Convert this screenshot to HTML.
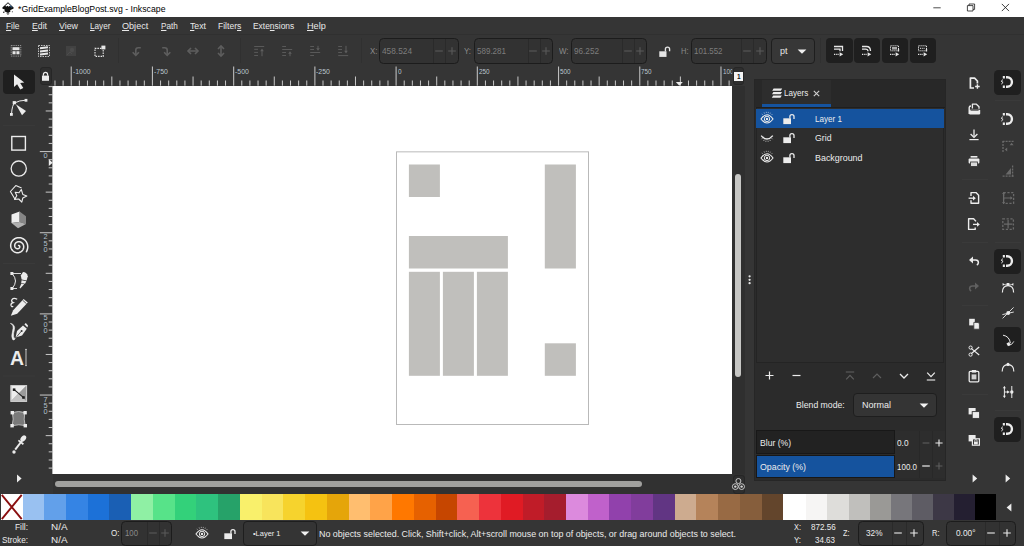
<!DOCTYPE html>
<html><head><meta charset="utf-8"><title>Inkscape</title>
<style>
html,body{margin:0;padding:0;}
body{width:1024px;height:546px;overflow:hidden;background:#353535;position:relative;font-family:"Liberation Sans",sans-serif;}
#app{position:absolute;left:0;top:0;width:1024px;height:546px;overflow:hidden;}
#app div,#app span,#app svg{position:absolute;}
#app div{box-sizing:border-box;}
.t{white-space:nowrap;transform-origin:0 50%;}
svg{overflow:visible;}
</style></head><body><div id="app">
<div style="left:0px;top:0px;width:1024px;height:17px;background:#ffffff;"></div>
<svg style="left:2px;top:2px;" width="12" height="13" viewBox="0 0 12 13"><path d="M6 0.3 L0.4 5.6 Q0 6.3 0.8 6.7 L2.6 7.6 Q3.2 8 2.6 8.5 Q2 9 2.8 9.4 L5 10.6 Q6 11.2 7 10.6 L8.2 9.8 Q8.8 9.3 8.2 8.8 Q7.8 8.3 8.6 7.9 L11.2 6.7 Q12 6.3 11.6 5.6 Z" fill="#111"/>
<path d="M6 1.2 L3.2 3.9 L4.6 4.6 L5.6 3.8 L6.6 4.7 L7.6 4.0 L8.9 4.1 Z" fill="#fff"/>
<path d="M7.2 2.3 L10.6 5.6 L8.8 5.2 Z" fill="#3a6ea5"/>
<circle cx="1.8" cy="10.3" r="0.7" fill="#111"/><circle cx="10.3" cy="9.8" r="0.5" fill="#111"/><path d="M4.2 11.6 L7.6 11.6 L6 12.8Z" fill="#111"/></svg>
<span id="t1" class="t" style="left:17.5px;top:3.72px;font-size:9.3px;line-height:11.16px;color:#000;font-weight:normal;transform:scaleX(0.9389);">*GridExampleBlogPost.svg - Inkscape</span>
<svg style="left:930px;top:0px;" width="94" height="17" viewBox="0 0 94 17"><path d="M3.3 7.8h7.4" stroke="#222" stroke-width="0.8" fill="none"/>
<path d="M37.4 5.6h5.6v5.4h-5.6z M39 5.6v-1.6h5.6v5.4h-1.6" stroke="#1a1a1a" stroke-width="0.8" fill="none" stroke-linejoin="round"/>
<path d="M71.8 3.9l7.2 7.2M79 3.9l-7.2 7.2" stroke="#1a1a1a" stroke-width="0.85" fill="none"/></svg>
<div style="left:0px;top:17px;width:1024px;height:18px;background:#353535;"></div>
<div style="left:0px;top:33.6px;width:1024px;height:1px;background:#303030;"></div>
<span id="t2" class="t" style="left:6px;top:20.24px;font-size:9.6px;line-height:11.52px;color:#e8e8e8;font-weight:normal;transform:scaleX(0.8718);text-underline-offset:1px;"><u>F</u>ile</span>
<span id="t3" class="t" style="left:31.5px;top:20.24px;font-size:9.6px;line-height:11.52px;color:#e8e8e8;font-weight:normal;transform:scaleX(0.9065);text-underline-offset:1px;"><u>E</u>dit</span>
<span id="t4" class="t" style="left:58.5px;top:20.24px;font-size:9.6px;line-height:11.52px;color:#e8e8e8;font-weight:normal;transform:scaleX(0.9205);text-underline-offset:1px;"><u>V</u>iew</span>
<span id="t5" class="t" style="left:89.5px;top:20.24px;font-size:9.6px;line-height:11.52px;color:#e8e8e8;font-weight:normal;transform:scaleX(0.8536);text-underline-offset:1px;"><u>L</u>ayer</span>
<span id="t6" class="t" style="left:122.25px;top:20.24px;font-size:9.6px;line-height:11.52px;color:#e8e8e8;font-weight:normal;transform:scaleX(0.9465);text-underline-offset:1px;"><u>O</u>bject</span>
<span id="t7" class="t" style="left:160.75px;top:20.24px;font-size:9.6px;line-height:11.52px;color:#e8e8e8;font-weight:normal;transform:scaleX(0.8481);text-underline-offset:1px;"><u>P</u>ath</span>
<span id="t8" class="t" style="left:189.5px;top:20.24px;font-size:9.6px;line-height:11.52px;color:#e8e8e8;font-weight:normal;transform:scaleX(0.9086);text-underline-offset:1px;"><u>T</u>ext</span>
<span id="t9" class="t" style="left:217.5px;top:20.24px;font-size:9.6px;line-height:11.52px;color:#e8e8e8;font-weight:normal;transform:scaleX(0.8900);text-underline-offset:1px;">Filter<u>s</u></span>
<span id="t10" class="t" style="left:253px;top:20.24px;font-size:9.6px;line-height:11.52px;color:#e8e8e8;font-weight:normal;transform:scaleX(0.8785);text-underline-offset:1px;">Exte<u>n</u>sions</span>
<span id="t11" class="t" style="left:306.75px;top:20.24px;font-size:9.6px;line-height:11.52px;color:#e8e8e8;font-weight:normal;transform:scaleX(0.9494);text-underline-offset:1px;"><u>H</u>elp</span>
<div style="left:0px;top:35px;width:1024px;height:31px;background:#353535;"></div>
<svg style="left:8.0px;top:42.8px;" width="16" height="16" viewBox="0 0 16 16"><rect x="3.2" y="2.5" width="9.6" height="10.6" fill="none" stroke="#bdbdbd" stroke-width="0.7" stroke-dasharray="1.3 0.9"/><rect x="4.5" y="4.2" width="7" height="3" fill="#e6e6e6"/><rect x="4.5" y="8.2" width="3.1" height="3.1" fill="#e6e6e6"/><rect x="8.4" y="8.2" width="3.1" height="3.1" fill="#e6e6e6"/></svg>
<svg style="left:35.75px;top:42.8px;" width="16" height="16" viewBox="0 0 16 16"><rect x="2.5" y="2.5" width="11" height="11" fill="none" stroke="#e6e6e6" stroke-width="0.8" stroke-dasharray="1.5 1"/><path d="M4 5.2l8-1M4 8.4l8-1M4 11.6l8-1" stroke="#e6e6e6" stroke-width="2"/></svg>
<svg style="left:63.0px;top:42.8px;" width="16" height="16" viewBox="0 0 16 16"><rect x="3" y="3" width="10" height="10" fill="#424242"/><circle cx="9" cy="7" r="2.2" fill="#4c4c4c"/><path d="M4 12l3-3 2 2" stroke="#4c4c4c" fill="none"/></svg>
<svg style="left:91.5px;top:42.8px;" width="16" height="16" viewBox="0 0 16 16"><path d="M9.4 5.4H3v8h8.2V6.6" fill="none" stroke="#e6e6e6" stroke-width="1.1" stroke-dasharray="1.5 1"/><rect x="9.4" y="2.6" width="4" height="3.8" fill="#e6e6e6"/></svg>
<div style="left:118.4px;top:38px;width:1px;height:25px;background:#303030;"></div>
<svg style="left:129.4px;top:42.8px;" width="16" height="16" viewBox="0 0 16 16"><path d="M11.8 4.7h-2.6q-2.4 0-2.4 2.4v4.8" stroke="#5e5e5e" stroke-width="1.6" fill="none"/><path d="M3.7 9.2l3.1 3.2 3.1-3.2" stroke="#5e5e5e" stroke-width="1.6" fill="none"/></svg>
<svg style="left:157.75px;top:42.8px;" width="16" height="16" viewBox="0 0 16 16"><path d="M4.2 4.7h2.6q2.4 0 2.4 2.4v4.8" stroke="#5e5e5e" stroke-width="1.6" fill="none"/><path d="M6.1 9.2l3.1 3.2 3.1-3.2" stroke="#5e5e5e" stroke-width="1.6" fill="none"/></svg>
<svg style="left:185.4px;top:42.8px;" width="16" height="16" viewBox="0 0 16 16"><path d="M3.6 8h8.8" stroke="#5e5e5e" stroke-width="1.6"/><path d="M6 5l-3 3 3 3M10 5l3 3-3 3" stroke="#5e5e5e" stroke-width="1.6" fill="none"/></svg>
<svg style="left:213.0px;top:43.099999999999994px;" width="16" height="16" viewBox="0 0 16 16"><path d="M8 3.6v8.8" stroke="#5e5e5e" stroke-width="1.6"/><path d="M5 6l3-3 3 3M5 10l3 3 3-3" stroke="#5e5e5e" stroke-width="1.6" fill="none"/></svg>
<div style="left:240.2px;top:38px;width:1px;height:25px;background:#303030;"></div>
<svg style="left:250.75px;top:42.8px;" width="16" height="16" viewBox="0 0 16 16"><path d="M3.2 3.5h10" stroke="#5e5e5e" stroke-width="0.9"/><path d="M3.2 6.3h3.8M3.2 9.4h3.8M3.2 12.5h3.8" stroke="#5e5e5e" stroke-width="0.9"/><path d="M11 13.2v-6" stroke="#5e5e5e" stroke-width="1"/><path d="M9.2 8.2l1.8-2.6 1.8 2.6z" fill="#5e5e5e"/></svg>
<svg style="left:278.75px;top:42.8px;" width="16" height="16" viewBox="0 0 16 16"><path d="M3.2 3.5h3.8" stroke="#5e5e5e" stroke-width="0.9"/><path d="M3.2 6.5h10" stroke="#5e5e5e" stroke-width="0.9"/><path d="M3.2 9.5h3.8M3.2 12.5h3.8" stroke="#5e5e5e" stroke-width="0.9"/><path d="M11 13.2v-3.4" stroke="#5e5e5e" stroke-width="1"/><path d="M9.2 10.8l1.8-2.6 1.8 2.6z" fill="#5e5e5e"/></svg>
<svg style="left:306.5px;top:42.8px;" width="16" height="16" viewBox="0 0 16 16"><path d="M3.2 3.5h3.8M3.2 6.5h3.8" stroke="#5e5e5e" stroke-width="0.9"/><path d="M3.2 9.5h10" stroke="#5e5e5e" stroke-width="0.9"/><path d="M3.2 12.5h3.8" stroke="#5e5e5e" stroke-width="0.9"/><path d="M11 2.8v3.4" stroke="#5e5e5e" stroke-width="1"/><path d="M9.2 5.2l1.8 2.6 1.8-2.6z" fill="#5e5e5e"/></svg>
<svg style="left:334.5px;top:42.8px;" width="16" height="16" viewBox="0 0 16 16"><path d="M3.2 3.5h3.8M3.2 6.5h3.8M3.2 9.5h3.8" stroke="#5e5e5e" stroke-width="0.9"/><path d="M3.2 12.6h10" stroke="#5e5e5e" stroke-width="0.9"/><path d="M11 2.8v6" stroke="#5e5e5e" stroke-width="1"/><path d="M9.2 7.8l1.8 2.6 1.8-2.6z" fill="#5e5e5e"/></svg>
<div style="left:361.3px;top:38px;width:1px;height:25px;background:#303030;"></div>
<span id="t12" class="t" style="left:370px;top:45.10px;font-size:9.5px;line-height:11.40px;color:#8a8a8a;font-weight:normal;transform:scaleX(0.8348);">X:</span>
<div style="left:378.85px;top:38.3px;width:80.3px;height:25.4px;background:#323232;border:1px solid #1c1c1c;border-radius:4.5px;"></div>
<div style="left:433.15px;top:39.3px;width:1px;height:23.4px;background:#2a2a2a;"></div>
<div style="left:445.25px;top:39.3px;width:1px;height:23.4px;background:#2a2a2a;"></div>
<span id="t13" class="t" style="left:381.75px;top:45.10px;font-size:9.5px;line-height:11.40px;color:#7d7d7d;font-weight:normal;transform:scaleX(0.8735);">458.524</span>
<svg style="left:434.75px;top:46.8px;" width="8" height="8" viewBox="0 0 8 8"><path d="M0.2 4h7.6" stroke="#5a5a5a" stroke-width="1.1"/></svg>
<svg style="left:447.75px;top:46.8px;" width="8" height="8" viewBox="0 0 8 8"><path d="M0.2 4h7.6M4 0.2v7.6" stroke="#5a5a5a" stroke-width="1.1"/></svg>
<span id="t14" class="t" style="left:464.25px;top:45.10px;font-size:9.5px;line-height:11.40px;color:#8a8a8a;font-weight:normal;transform:scaleX(0.8281);">Y:</span>
<div style="left:473.85px;top:38.3px;width:79.05px;height:25.4px;background:#323232;border:1px solid #1c1c1c;border-radius:4.5px;"></div>
<div style="left:527.65px;top:39.3px;width:1px;height:23.4px;background:#2a2a2a;"></div>
<div style="left:539.75px;top:39.3px;width:1px;height:23.4px;background:#2a2a2a;"></div>
<span id="t15" class="t" style="left:476.5px;top:45.10px;font-size:9.5px;line-height:11.40px;color:#7d7d7d;font-weight:normal;transform:scaleX(0.8444);">589.281</span>
<svg style="left:529.25px;top:46.8px;" width="8" height="8" viewBox="0 0 8 8"><path d="M0.2 4h7.6" stroke="#5a5a5a" stroke-width="1.1"/></svg>
<svg style="left:542.25px;top:46.8px;" width="8" height="8" viewBox="0 0 8 8"><path d="M0.2 4h7.6M4 0.2v7.6" stroke="#5a5a5a" stroke-width="1.1"/></svg>
<span id="t16" class="t" style="left:558.75px;top:45.10px;font-size:9.5px;line-height:11.40px;color:#8a8a8a;font-weight:normal;transform:scaleX(0.8306);">W:</span>
<div style="left:571.35px;top:38.3px;width:75.3px;height:25.4px;background:#323232;border:1px solid #1c1c1c;border-radius:4.5px;"></div>
<div style="left:621.9px;top:39.3px;width:1px;height:23.4px;background:#2a2a2a;"></div>
<div style="left:633.75px;top:39.3px;width:1px;height:23.4px;background:#2a2a2a;"></div>
<span id="t17" class="t" style="left:573.75px;top:45.10px;font-size:9.5px;line-height:11.40px;color:#7d7d7d;font-weight:normal;transform:scaleX(0.8602);">96.252</span>
<svg style="left:623.5px;top:46.8px;" width="8" height="8" viewBox="0 0 8 8"><path d="M0.2 4h7.6" stroke="#5a5a5a" stroke-width="1.1"/></svg>
<svg style="left:636px;top:46.8px;" width="8" height="8" viewBox="0 0 8 8"><path d="M0.2 4h7.6M4 0.2v7.6" stroke="#5a5a5a" stroke-width="1.1"/></svg>
<svg style="left:658.6px;top:45px;" width="12" height="13" viewBox="0 0 12 13"><rect x="0.3" y="6.3" width="7.2" height="5.6" fill="#e6e6e6"/><path d="M6.4 6.5v-2.3a2.1 2.1 0 0 1 4.2 0v2" stroke="#e6e6e6" stroke-width="1.35" fill="none"/></svg>
<span id="t18" class="t" style="left:680.75px;top:45.10px;font-size:9.5px;line-height:11.40px;color:#8a8a8a;font-weight:normal;transform:scaleX(0.7895);">H:</span>
<div style="left:691.35px;top:38.3px;width:75.3px;height:25.4px;background:#323232;border:1px solid #1c1c1c;border-radius:4.5px;"></div>
<div style="left:741.15px;top:39.3px;width:1px;height:23.4px;background:#2a2a2a;"></div>
<div style="left:753.375px;top:39.3px;width:1px;height:23.4px;background:#2a2a2a;"></div>
<span id="t19" class="t" style="left:694.25px;top:45.10px;font-size:9.5px;line-height:11.40px;color:#7d7d7d;font-weight:normal;transform:scaleX(0.8298);">101.552</span>
<svg style="left:742.75px;top:46.8px;" width="8" height="8" viewBox="0 0 8 8"><path d="M0.2 4h7.6" stroke="#5a5a5a" stroke-width="1.1"/></svg>
<svg style="left:756px;top:46.8px;" width="8" height="8" viewBox="0 0 8 8"><path d="M0.2 4h7.6M4 0.2v7.6" stroke="#5a5a5a" stroke-width="1.1"/></svg>
<div style="left:770.75px;top:38.3px;width:43.75px;height:25.4px;background:#373737;border:1px solid #1e1e1e;border-radius:4px;"></div>
<span id="t20" class="t" style="left:779.5px;top:45.10px;font-size:9.5px;line-height:11.40px;color:#e6e6e6;font-weight:normal;transform:scaleX(0.9449);">pt</span>
<svg style="left:796.5px;top:48.5px;" width="10" height="5" viewBox="0 0 10 5"><path d="M0.6 0.4h8.8l-4.4 4.4z" fill="#f0f0f0"/></svg>
<div style="left:820.4px;top:38px;width:1px;height:25px;background:#303030;"></div>
<div style="left:826.25px;top:38.25px;width:26.25px;height:24.75px;background:#1f1f1f;border-radius:4px;"></div>
<svg style="left:831.375px;top:42.8px;" width="16" height="16" viewBox="0 0 16 16"><path d="M3 3.5h8.5v4.5M3 6.2h6v2" stroke="#e6e6e6" stroke-width="1.3" fill="none"/><path d="M3 11.3h5" stroke="#e6e6e6" stroke-width="1.2" stroke-dasharray="1.3 0.9"/><path d="M8.6 9.2l3.6 2.1-3.6 2.1z" fill="#e6e6e6"/></svg>
<div style="left:854.25px;top:38.25px;width:25.75px;height:24.75px;background:#1f1f1f;border-radius:4px;"></div>
<svg style="left:859.125px;top:42.8px;" width="16" height="16" viewBox="0 0 16 16"><path d="M3 3.5h4.5q4 0 4 4.5M3 6.2h3.5q2.5 0 2.5 2" stroke="#e6e6e6" stroke-width="1.3" fill="none"/><path d="M3 11.3h5" stroke="#e6e6e6" stroke-width="1.2" stroke-dasharray="1.3 0.9"/><path d="M8.6 9.2l3.6 2.1-3.6 2.1z" fill="#e6e6e6"/></svg>
<div style="left:882px;top:38.25px;width:26px;height:24.75px;background:#1f1f1f;border-radius:4px;"></div>
<svg style="left:887.0px;top:42.8px;" width="16" height="16" viewBox="0 0 16 16"><rect x="3.5" y="2.8" width="8" height="5" fill="none" stroke="#e6e6e6" stroke-width="1" stroke-dasharray="1.2 0.8"/><rect x="5" y="4" width="5" height="2.6" fill="#e6e6e6" opacity="0.7"/><path d="M11.5 6v2.5" stroke="#e6e6e6" stroke-width="1.3"/><path d="M3 11.3h5" stroke="#e6e6e6" stroke-width="1.2" stroke-dasharray="1.3 0.9"/><path d="M8.6 9.2l3.6 2.1-3.6 2.1z" fill="#e6e6e6"/></svg>
<div style="left:909.5px;top:38.25px;width:26.25px;height:24.75px;background:#1f1f1f;border-radius:4px;"></div>
<svg style="left:914.625px;top:42.8px;" width="16" height="16" viewBox="0 0 16 16"><rect x="3.5" y="2.8" width="8" height="5" fill="none" stroke="#e6e6e6" stroke-width="1" stroke-dasharray="1.2 0.8"/><path d="M5 5.3h5" stroke="#e6e6e6" stroke-width="1" stroke-dasharray="1 0.8"/><path d="M11.5 6v2.5" stroke="#e6e6e6" stroke-width="1.3"/><path d="M3 11.3h5" stroke="#e6e6e6" stroke-width="1.2" stroke-dasharray="1.3 0.9"/><path d="M8.6 9.2l3.6 2.1-3.6 2.1z" fill="#e6e6e6"/></svg>
<div style="left:732px;top:85.6px;width:13px;height:388.4px;background:#2f2f2f;"></div>
<div style="left:53px;top:474px;width:692px;height:20px;background:#313131;"></div>
<div style="left:52.2px;top:85.6px;width:1px;height:388.4px;background:#b5b5b5;"></div>
<div style="left:53px;top:85.6px;width:679px;height:388.4px;background:#ffffff;"></div>
<svg style="left:0px;top:0px;" width="1024" height="546" viewBox="0 0 1024 546"><rect x="54.48" y="80.5" width="1" height="5.2" fill="#c8c8c8"/><rect x="62.60" y="80.5" width="1" height="5.2" fill="#c8c8c8"/><rect x="70.67" y="66.5" width="1.1" height="19.2" fill="#bdbdbd"/><rect x="78.84" y="80.5" width="1" height="5.2" fill="#c8c8c8"/><rect x="86.96" y="80.5" width="1" height="5.2" fill="#c8c8c8"/><rect x="95.09" y="80.5" width="1" height="5.2" fill="#c8c8c8"/><rect x="103.21" y="80.5" width="1" height="5.2" fill="#c8c8c8"/><rect x="111.33" y="76.5" width="1" height="9.2" fill="#c8c8c8"/><rect x="119.45" y="80.5" width="1" height="5.2" fill="#c8c8c8"/><rect x="127.57" y="80.5" width="1" height="5.2" fill="#c8c8c8"/><rect x="135.70" y="80.5" width="1" height="5.2" fill="#c8c8c8"/><rect x="143.82" y="80.5" width="1" height="5.2" fill="#c8c8c8"/><rect x="151.89" y="66.5" width="1.1" height="19.2" fill="#bdbdbd"/><rect x="160.06" y="80.5" width="1" height="5.2" fill="#c8c8c8"/><rect x="168.18" y="80.5" width="1" height="5.2" fill="#c8c8c8"/><rect x="176.31" y="80.5" width="1" height="5.2" fill="#c8c8c8"/><rect x="184.43" y="80.5" width="1" height="5.2" fill="#c8c8c8"/><rect x="192.55" y="76.5" width="1" height="9.2" fill="#c8c8c8"/><rect x="200.67" y="80.5" width="1" height="5.2" fill="#c8c8c8"/><rect x="208.79" y="80.5" width="1" height="5.2" fill="#c8c8c8"/><rect x="216.92" y="80.5" width="1" height="5.2" fill="#c8c8c8"/><rect x="225.04" y="80.5" width="1" height="5.2" fill="#c8c8c8"/><rect x="233.11" y="66.5" width="1.1" height="19.2" fill="#bdbdbd"/><rect x="241.28" y="80.5" width="1" height="5.2" fill="#c8c8c8"/><rect x="249.40" y="80.5" width="1" height="5.2" fill="#c8c8c8"/><rect x="257.53" y="80.5" width="1" height="5.2" fill="#c8c8c8"/><rect x="265.65" y="80.5" width="1" height="5.2" fill="#c8c8c8"/><rect x="273.77" y="76.5" width="1" height="9.2" fill="#c8c8c8"/><rect x="281.89" y="80.5" width="1" height="5.2" fill="#c8c8c8"/><rect x="290.01" y="80.5" width="1" height="5.2" fill="#c8c8c8"/><rect x="298.14" y="80.5" width="1" height="5.2" fill="#c8c8c8"/><rect x="306.26" y="80.5" width="1" height="5.2" fill="#c8c8c8"/><rect x="314.33" y="66.5" width="1.1" height="19.2" fill="#bdbdbd"/><rect x="322.50" y="80.5" width="1" height="5.2" fill="#c8c8c8"/><rect x="330.62" y="80.5" width="1" height="5.2" fill="#c8c8c8"/><rect x="338.75" y="80.5" width="1" height="5.2" fill="#c8c8c8"/><rect x="346.87" y="80.5" width="1" height="5.2" fill="#c8c8c8"/><rect x="354.99" y="76.5" width="1" height="9.2" fill="#c8c8c8"/><rect x="363.11" y="80.5" width="1" height="5.2" fill="#c8c8c8"/><rect x="371.23" y="80.5" width="1" height="5.2" fill="#c8c8c8"/><rect x="379.36" y="80.5" width="1" height="5.2" fill="#c8c8c8"/><rect x="387.48" y="80.5" width="1" height="5.2" fill="#c8c8c8"/><rect x="395.55" y="66.5" width="1.1" height="19.2" fill="#bdbdbd"/><rect x="403.72" y="80.5" width="1" height="5.2" fill="#c8c8c8"/><rect x="411.84" y="80.5" width="1" height="5.2" fill="#c8c8c8"/><rect x="419.97" y="80.5" width="1" height="5.2" fill="#c8c8c8"/><rect x="428.09" y="80.5" width="1" height="5.2" fill="#c8c8c8"/><rect x="436.21" y="76.5" width="1" height="9.2" fill="#c8c8c8"/><rect x="444.33" y="80.5" width="1" height="5.2" fill="#c8c8c8"/><rect x="452.45" y="80.5" width="1" height="5.2" fill="#c8c8c8"/><rect x="460.58" y="80.5" width="1" height="5.2" fill="#c8c8c8"/><rect x="468.70" y="80.5" width="1" height="5.2" fill="#c8c8c8"/><rect x="476.77" y="66.5" width="1.1" height="19.2" fill="#bdbdbd"/><rect x="484.94" y="80.5" width="1" height="5.2" fill="#c8c8c8"/><rect x="493.06" y="80.5" width="1" height="5.2" fill="#c8c8c8"/><rect x="501.19" y="80.5" width="1" height="5.2" fill="#c8c8c8"/><rect x="509.31" y="80.5" width="1" height="5.2" fill="#c8c8c8"/><rect x="517.43" y="76.5" width="1" height="9.2" fill="#c8c8c8"/><rect x="525.55" y="80.5" width="1" height="5.2" fill="#c8c8c8"/><rect x="533.67" y="80.5" width="1" height="5.2" fill="#c8c8c8"/><rect x="541.80" y="80.5" width="1" height="5.2" fill="#c8c8c8"/><rect x="549.92" y="80.5" width="1" height="5.2" fill="#c8c8c8"/><rect x="557.99" y="66.5" width="1.1" height="19.2" fill="#bdbdbd"/><rect x="566.16" y="80.5" width="1" height="5.2" fill="#c8c8c8"/><rect x="574.28" y="80.5" width="1" height="5.2" fill="#c8c8c8"/><rect x="582.41" y="80.5" width="1" height="5.2" fill="#c8c8c8"/><rect x="590.53" y="80.5" width="1" height="5.2" fill="#c8c8c8"/><rect x="598.65" y="76.5" width="1" height="9.2" fill="#c8c8c8"/><rect x="606.77" y="80.5" width="1" height="5.2" fill="#c8c8c8"/><rect x="614.89" y="80.5" width="1" height="5.2" fill="#c8c8c8"/><rect x="623.02" y="80.5" width="1" height="5.2" fill="#c8c8c8"/><rect x="631.14" y="80.5" width="1" height="5.2" fill="#c8c8c8"/><rect x="639.21" y="66.5" width="1.1" height="19.2" fill="#bdbdbd"/><rect x="647.38" y="80.5" width="1" height="5.2" fill="#c8c8c8"/><rect x="655.50" y="80.5" width="1" height="5.2" fill="#c8c8c8"/><rect x="663.63" y="80.5" width="1" height="5.2" fill="#c8c8c8"/><rect x="671.75" y="80.5" width="1" height="5.2" fill="#c8c8c8"/><rect x="679.87" y="76.5" width="1" height="9.2" fill="#c8c8c8"/><rect x="687.99" y="80.5" width="1" height="5.2" fill="#c8c8c8"/><rect x="696.11" y="80.5" width="1" height="5.2" fill="#c8c8c8"/><rect x="704.24" y="80.5" width="1" height="5.2" fill="#c8c8c8"/><rect x="712.36" y="80.5" width="1" height="5.2" fill="#c8c8c8"/><rect x="720.43" y="66.5" width="1.1" height="19.2" fill="#bdbdbd"/><rect x="728.60" y="80.5" width="1" height="5.2" fill="#c8c8c8"/><path d="M675.8 82.1h7l-3.5 3.6z" fill="#ececec"/><rect x="48.7" y="86.12" width="4.5" height="1" fill="#c8c8c8"/><rect x="48.7" y="94.23" width="4.5" height="1" fill="#c8c8c8"/><rect x="48.7" y="102.35" width="4.5" height="1" fill="#c8c8c8"/><rect x="45.7" y="110.47" width="7.5" height="1" fill="#c8c8c8"/><rect x="48.7" y="118.58" width="4.5" height="1" fill="#c8c8c8"/><rect x="48.7" y="126.70" width="4.5" height="1" fill="#c8c8c8"/><rect x="48.7" y="134.82" width="4.5" height="1" fill="#c8c8c8"/><rect x="48.7" y="142.93" width="4.5" height="1" fill="#c8c8c8"/><rect x="39.8" y="151.00" width="13.4" height="1.1" fill="#bdbdbd"/><rect x="48.7" y="159.17" width="4.5" height="1" fill="#c8c8c8"/><rect x="48.7" y="167.28" width="4.5" height="1" fill="#c8c8c8"/><rect x="48.7" y="175.40" width="4.5" height="1" fill="#c8c8c8"/><rect x="48.7" y="183.52" width="4.5" height="1" fill="#c8c8c8"/><rect x="45.7" y="191.63" width="7.5" height="1" fill="#c8c8c8"/><rect x="48.7" y="199.75" width="4.5" height="1" fill="#c8c8c8"/><rect x="48.7" y="207.87" width="4.5" height="1" fill="#c8c8c8"/><rect x="48.7" y="215.98" width="4.5" height="1" fill="#c8c8c8"/><rect x="48.7" y="224.10" width="4.5" height="1" fill="#c8c8c8"/><rect x="39.8" y="232.17" width="13.4" height="1.1" fill="#bdbdbd"/><rect x="48.7" y="240.33" width="4.5" height="1" fill="#c8c8c8"/><rect x="48.7" y="248.45" width="4.5" height="1" fill="#c8c8c8"/><rect x="48.7" y="256.56" width="4.5" height="1" fill="#c8c8c8"/><rect x="48.7" y="264.68" width="4.5" height="1" fill="#c8c8c8"/><rect x="45.7" y="272.80" width="7.5" height="1" fill="#c8c8c8"/><rect x="48.7" y="280.91" width="4.5" height="1" fill="#c8c8c8"/><rect x="48.7" y="289.03" width="4.5" height="1" fill="#c8c8c8"/><rect x="48.7" y="297.15" width="4.5" height="1" fill="#c8c8c8"/><rect x="48.7" y="305.26" width="4.5" height="1" fill="#c8c8c8"/><rect x="39.8" y="313.33" width="13.4" height="1.1" fill="#bdbdbd"/><rect x="48.7" y="321.50" width="4.5" height="1" fill="#c8c8c8"/><rect x="48.7" y="329.61" width="4.5" height="1" fill="#c8c8c8"/><rect x="48.7" y="337.73" width="4.5" height="1" fill="#c8c8c8"/><rect x="48.7" y="345.85" width="4.5" height="1" fill="#c8c8c8"/><rect x="45.7" y="353.96" width="7.5" height="1" fill="#c8c8c8"/><rect x="48.7" y="362.08" width="4.5" height="1" fill="#c8c8c8"/><rect x="48.7" y="370.20" width="4.5" height="1" fill="#c8c8c8"/><rect x="48.7" y="378.31" width="4.5" height="1" fill="#c8c8c8"/><rect x="48.7" y="386.43" width="4.5" height="1" fill="#c8c8c8"/><rect x="39.8" y="394.50" width="13.4" height="1.1" fill="#bdbdbd"/><rect x="48.7" y="402.66" width="4.5" height="1" fill="#c8c8c8"/><rect x="48.7" y="410.78" width="4.5" height="1" fill="#c8c8c8"/><rect x="48.7" y="418.89" width="4.5" height="1" fill="#c8c8c8"/><rect x="48.7" y="427.01" width="4.5" height="1" fill="#c8c8c8"/><rect x="45.7" y="435.13" width="7.5" height="1" fill="#c8c8c8"/><rect x="48.7" y="443.24" width="4.5" height="1" fill="#c8c8c8"/><rect x="48.7" y="451.36" width="4.5" height="1" fill="#c8c8c8"/><rect x="48.7" y="459.48" width="4.5" height="1" fill="#c8c8c8"/><rect x="48.7" y="467.59" width="4.5" height="1" fill="#c8c8c8"/><path d="M48.8 159.3v6.7l3.9-3.35z" fill="#ececec"/></svg>
<span id="t21" class="t" style="left:72.82000000000004px;top:68.20px;font-size:7px;line-height:8.40px;color:#bcc6d0;font-weight:normal;transform:scaleX(0.9829);">-1000</span>
<span id="t22" class="t" style="left:154.04000000000002px;top:68.20px;font-size:7px;line-height:8.40px;color:#bcc6d0;font-weight:normal;transform:scaleX(0.9846);">-750</span>
<span id="t23" class="t" style="left:235.26000000000002px;top:68.20px;font-size:7px;line-height:8.40px;color:#bcc6d0;font-weight:normal;transform:scaleX(0.9846);">-500</span>
<span id="t24" class="t" style="left:316.47999999999996px;top:68.20px;font-size:7px;line-height:8.40px;color:#bcc6d0;font-weight:normal;transform:scaleX(0.9846);">-250</span>
<span id="t25" class="t" style="left:397.7px;top:68.20px;font-size:7px;line-height:8.40px;color:#bcc6d0;font-weight:normal;transform:scaleX(0.9216);">0</span>
<span id="t26" class="t" style="left:478.92px;top:68.20px;font-size:7px;line-height:8.40px;color:#bcc6d0;font-weight:normal;transform:scaleX(0.9070);">250</span>
<span id="t27" class="t" style="left:560.14px;top:68.20px;font-size:7px;line-height:8.40px;color:#bcc6d0;font-weight:normal;transform:scaleX(0.9070);">500</span>
<span id="t28" class="t" style="left:641.36px;top:68.20px;font-size:7px;line-height:8.40px;color:#bcc6d0;font-weight:normal;transform:scaleX(0.9070);">750</span>
<span id="t29" class="t" style="left:722.58px;top:68.20px;font-size:7px;line-height:8.40px;color:#bcc6d0;font-weight:normal;transform:scaleX(0.9115);clip-path:inset(0 35% 0 0);">1000</span>
<span id="r30" style="left:43.5px;top:153.15px;width:4px;text-align:center;font-size:7.3px;line-height:6.2px;color:#b4c0cb;">0</span>
<span id="r31" style="left:43.5px;top:234.32px;width:4px;text-align:center;font-size:7.3px;line-height:6.2px;color:#b4c0cb;">2<br>5<br>0</span>
<span id="r32" style="left:43.5px;top:315.48px;width:4px;text-align:center;font-size:7.3px;line-height:6.2px;color:#b4c0cb;">5<br>0<br>0</span>
<span id="r33" style="left:43.5px;top:396.65px;width:4px;text-align:center;font-size:7.3px;line-height:6.2px;color:#b4c0cb;">7<br>5<br>0</span>
<div style="left:40px;top:66.8px;width:12.4px;height:18.6px;background:#2e2e2e;border:1px solid #262626;border-radius:3px;"></div>
<svg style="left:41.4px;top:71px;" width="9" height="11" viewBox="0 0 9 11"><rect x="1" y="4.6" width="7" height="5.2" fill="#ececec"/><path d="M2.4 4.8v-1.4a2.1 2.1 0 0 1 4.2 0v1.4" stroke="#ececec" stroke-width="1.2" fill="none"/></svg>
<svg style="left:0px;top:0px;" width="1024" height="546" viewBox="0 0 1024 546"><rect x="396.5" y="151.85" width="192" height="272.65" fill="#ffffff" stroke="#b9b9b9" stroke-width="1"/><rect x="408.9" y="164.5" width="31.00" height="32.50" fill="#c0bfbc"/><rect x="544.8" y="164.5" width="31.10" height="104.00" fill="#c0bfbc"/><rect x="408.9" y="236.0" width="99.00" height="32.50" fill="#c0bfbc"/><rect x="408.9" y="271.8" width="31.00" height="104.00" fill="#c0bfbc"/><rect x="442.9" y="271.8" width="31.00" height="104.00" fill="#c0bfbc"/><rect x="476.9" y="271.8" width="31.00" height="104.00" fill="#c0bfbc"/><rect x="544.8" y="343.3" width="31.10" height="32.50" fill="#c0bfbc"/></svg>
<div style="left:732.8px;top:67.2px;width:11.6px;height:18px;background:#2e2e2e;border:1px solid #262626;border-radius:3px;"></div>
<div style="left:734px;top:72px;width:9px;height:9.2px;background:#f4f4f4;"></div>
<span id="t34" class="t" style="left:736.6px;top:72.20px;font-size:7.5px;line-height:9.00px;color:#111;font-weight:bold;transform:scaleX(0.8629);">1</span>
<div style="left:735.2px;top:173.8px;width:6.2px;height:203px;background:#c6c6c4;border-radius:3.1px;"></div>
<div style="left:55.4px;top:481px;width:586.6px;height:5.9px;background:#a0a09e;border-radius:3px;"></div>
<div style="left:732.5px;top:474.5px;width:12px;height:19px;background:#2e2e2e;border:1px solid #262626;border-radius:3px;"></div>
<svg style="left:730px;top:474px;" width="18" height="20" viewBox="0 0 18 20"><circle cx="8.4" cy="7" r="2.5" fill="none" stroke="#d8d8d8" stroke-width="0.9"/><circle cx="5.3" cy="12.6" r="2.9" fill="none" stroke="#d8d8d8" stroke-width="0.9"/><circle cx="11.6" cy="12.6" r="2.9" fill="none" stroke="#d8d8d8" stroke-width="0.9"/><circle cx="5.3" cy="12.6" r="1.2" fill="#d8d8d8"/><circle cx="11.6" cy="12.6" r="1.2" fill="#d8d8d8"/></svg>
<svg style="left:745px;top:270px;" width="10" height="20" viewBox="0 0 10 20"><circle cx="4.6" cy="6.3" r="1.15" fill="#e4e4e4"/><circle cx="4.6" cy="9.8" r="1.15" fill="#e4e4e4"/><circle cx="4.6" cy="13.2" r="1.15" fill="#e4e4e4"/></svg>
<div style="left:3px;top:70px;width:32px;height:24px;background:#1f1f1f;border-radius:4px;"></div>
<svg style="left:0px;top:0px;" width="60" height="546" viewBox="0 0 60 546"><path d="M14 74.4 L14 87 L17.1 84.3 L20.3 89.6 L23.3 88 L20.2 82.9 L24.3 82.6 Z" fill="#ececec"/><path d="M11.5 114.5 Q12 104.5 15 102.8 Q19 100.4 26 100.2" fill="none" stroke="#ececec" stroke-width="1"/><rect x="10" y="113" width="2.8" height="2.8" fill="#ececec"/><rect x="12.7" y="101.1" width="3.2" height="3.2" fill="#ececec"/><rect x="24.6" y="98.9" width="2.8" height="2.8" fill="#ececec"/><path d="M15.8 104.2 L26 111 L22 115.2 Z" fill="#ececec"/><rect x="3" y="124.8" width="32" height="1" fill="#3b3b3b"/><rect x="3" y="263.1" width="32" height="1" fill="#3b3b3b"/><rect x="3" y="375.5" width="32" height="1" fill="#3b3b3b"/><rect x="11.8" y="136.5" width="13.6" height="13.6" fill="none" stroke="#ececec" stroke-width="1.4"/><circle cx="18.75" cy="168.6" r="7.6" fill="none" stroke="#ececec" stroke-width="1.3"/><path d="M15.2 199.5 L10.4 191.5 L15.8 185.6 L21.6 188" fill="none" stroke="#ececec" stroke-width="1.1" stroke-linejoin="round"/><path d="M21.3 189.5 L22.8 194.4 L26.8 196 L22.8 198 L21.8 202.2 L18.8 199 L14.6 199.4 L16.8 195.8 L15.2 192.2 L19 192.8 Z" fill="none" stroke="#ececec" stroke-width="1.1" stroke-linejoin="round"/><path d="M11.5 214.4 L19.6 211.4 L19.6 222 L11.5 223 Z" fill="#eeeeee"/><path d="M19.6 211.4 L26 216.2 L26 224 L19.6 222 Z" fill="#858585"/><path d="M11.5 223 L19.6 222 L26 224 L18 228.2 Z" fill="#b0b0b0"/><path d="M18.59 245.54 L18.72 245.53 L18.85 245.54 L18.98 245.57 L19.11 245.63 L19.24 245.71 L19.36 245.81 L19.48 245.93 L19.57 246.08 L19.66 246.24 L19.72 246.43 L19.75 246.62 L19.76 246.83 L19.74 247.05 L19.69 247.27 L19.61 247.49 L19.50 247.71 L19.36 247.91 L19.18 248.10 L18.98 248.28 L18.74 248.43 L18.49 248.55 L18.21 248.65 L17.91 248.70 L17.60 248.73 L17.28 248.71 L16.95 248.65 L16.63 248.55 L16.32 248.41 L16.01 248.22 L15.73 247.99 L15.47 247.72 L15.24 247.42 L15.04 247.08 L14.88 246.72 L14.77 246.32 L14.70 245.91 L14.69 245.48 L14.72 245.05 L14.81 244.62 L14.96 244.19 L15.16 243.77 L15.41 243.38 L15.72 243.01 L16.08 242.67 L16.48 242.38 L16.92 242.13 L17.39 241.93 L17.90 241.79 L18.42 241.71 L18.96 241.69 L19.51 241.74 L20.06 241.85 L20.60 242.04 L21.12 242.29 L21.61 242.60 L22.07 242.98 L22.49 243.42 L22.85 243.91 L23.16 244.45 L23.41 245.03 L23.58 245.65 L23.69 246.29 L23.71 246.95 L23.66 247.61 L23.53 248.27 L23.31 248.92 L23.02 249.55 L22.65 250.15 L22.20 250.70 L21.68 251.20 L21.11 251.65 L20.47 252.02 L19.79 252.32 L19.06 252.54 L18.31 252.68 L17.54 252.72 L16.76 252.67 L15.98 252.53 L15.21 252.29 L14.47 251.96 L13.77 251.53 L13.12 251.03 L12.52 250.44 L12.00 249.78 L11.55 249.05 L11.18 248.27 L10.91 247.44 L10.74 246.57 L10.68 245.69 L10.71 244.79 L10.86 243.89 L11.12 243.01 L11.48 242.16 L11.94 241.34 L12.50 240.59 L13.16 239.89 L13.90 239.28 L14.71 238.75 L15.59 238.32 L16.52 237.99 L17.50 237.77 L18.50 237.67 L19.52 237.69 L20.53 237.84 L21.53 238.10 L22.50 238.48 L23.43 238.98 L24.29 239.59 L25.09 240.31 L25.80 241.12 L26.41 242.02 L26.92 242.99 L27.31 244.02 L27.58 245.10 L27.72 246.22 L27.73 247.35 L27.60 248.49 L27.33 249.61 L26.94 250.69 L26.41 251.74" fill="none" stroke="#ececec" stroke-width="1.5" stroke-linecap="round" stroke-linejoin="round"/></svg>
<svg style="left:0px;top:0px;" width="60" height="546" viewBox="0 0 60 546"><path d="M12 273.5 Q19 281 12 288.5" fill="none" stroke="#ececec" stroke-width="1"/><path d="M12 273.5 L21 273.5" stroke="#ececec" stroke-width="0.9"/><path d="M12 288.5 L17 288.5" stroke="#ececec" stroke-width="0.9"/><rect x="10.4" y="272" width="3" height="3" fill="#ececec"/><rect x="10.4" y="287" width="3" height="3" fill="#ececec"/><path d="M23 272 Q26.6 272 27.8 276.2 L26.6 280.6 L21.6 279.6 L20.8 275.4 Z" fill="#ececec"/><path d="M21.6 280.3 L26.3 281.3 L25 283.8 L21.2 283 Z" fill="#ececec"/><path d="M21.4 283.6 L24.2 284.2 L20.2 288.4 L19.6 287.8 Z" fill="#ececec"/><path d="M13.2 310.2 L23.6 299 L27.8 302.6 L17.2 313.8 L10.8 315.8 Z" fill="#ececec"/><path d="M22.6 300.2 L26.6 303.8" stroke="#353535" stroke-width="0.8"/><path d="M17.2 299.2 Q13.6 297.4 12 299.6 Q10.8 301.6 13.2 302.6 Q10.6 303.4 11 305.4 Q11.6 307.4 13.2 306.2" fill="none" stroke="#ececec" stroke-width="1.25"/><path d="M10.4 323.4 Q14.4 324.6 12.6 331 Q11 337 12.6 339.4 Q14 341.2 15.2 338.4 Q13.8 339 13.6 336.4 Q13.2 333.6 14.4 329.6 Q15.6 324.6 10.4 323.4 Z" fill="#ececec" stroke="#ececec" stroke-width="0.6"/><path d="M15.6 337.6 L17 331 L23 325.6 L26.8 328.8 L22 335.4 Z" fill="#ececec"/><path d="M24.4 324.2 L25.8 323 L28 325.4 L27.4 327.4 Z" fill="#ececec"/><path d="M16.6 336.8 L21.4 331.2" stroke="#353535" stroke-width="0.8"/><circle cx="21.6" cy="331" r="1" fill="#353535"/><path d="M25.2 349.4 L26.8 349.4 M25.2 365.6 L26.8 365.6 M26 349.4 L26 365.6" stroke="#ececec" stroke-width="0.8" fill="none"/><rect x="10.8" y="385.6" width="15.8" height="15.8" fill="#8c8c8c" stroke="#d6d6d6" stroke-width="1"/><path d="M11.3 386.1 L26.1 386.1 L11.3 400.9 Z" fill="#ededed"/><path d="M11.3 400.9 L26.1 386.1 L26.1 400.9 Z" fill="#9a9a9a"/><path d="M11.3 400.9 L18.7 393.5 L26.1 400.9Z" fill="#e2e2e2" opacity="0.55"/><path d="M14.2 389.6 L23.6 397.6" stroke="#1e1e1e" stroke-width="1.1"/><rect x="12.8" y="388.4" width="2.6" height="2.6" fill="#1e1e1e"/><rect x="22.2" y="396.2" width="2.6" height="2.6" fill="#1e1e1e"/><path d="M12.4 412.6 Q18.6 410.4 24.8 412.6 Q23.4 419.4 25.2 425.6 Q18.8 423.8 12.2 425.8 Q14 419 12.4 412.6 Z" fill="#7a7a7a" stroke="#d0d0d0" stroke-width="0.8"/><rect x="10.6" y="411" width="3.4" height="3.4" fill="#ececec"/><rect x="23.4" y="411" width="3.4" height="3.4" fill="#ececec"/><rect x="10.4" y="424" width="3.4" height="3.4" fill="#ececec"/><rect x="23.6" y="424" width="3.4" height="3.4" fill="#ececec"/><path d="M15.2 449.6 L21.8 441" stroke="#ececec" stroke-width="2" /><path d="M18.4 440.4 L23.4 444.2" stroke="#ececec" stroke-width="1.7"/><ellipse cx="23.3" cy="438.6" rx="2.4" ry="3.5" transform="rotate(38 23.3 438.6)" fill="#ececec"/><circle cx="14" cy="452" r="1.7" fill="#ececec"/><path d="M17 474.6 L21.6 478.6 L17 482.6 Z" fill="#ececec"/></svg>
<span id="t35" class="t" style="left:9.8px;top:345.90px;font-size:20.5px;line-height:24.60px;color:#ececec;font-weight:bold;transform:scaleX(0.9451);">A</span>
<div style="left:754.2px;top:79px;width:192px;height:402.3px;background:#2b2b2b;border:1px solid #262626;"></div>
<div style="left:755px;top:80px;width:190px;height:26.5px;background:#282828;"></div>
<div style="left:761.75px;top:80px;width:69.25px;height:24px;background:#2d2d2d;"></div>
<div style="left:761.75px;top:104px;width:69.25px;height:3px;background:#15539e;"></div>
<div style="left:755.5px;top:107px;width:189.5px;height:1px;background:#1e1e1e;"></div>
<svg style="left:770.5px;top:86.8px;" width="12" height="12" viewBox="0 0 12 12"><path d="M2.6 1.4h8.6l-1.4 2.3h-8.6z M2.4 4.9h8.6l-1.4 2.3h-8.6z M2.2 8.4h8.6l-1.4 2.3h-8.6z" fill="#ececec"/></svg>
<span id="t36" class="t" style="left:784.25px;top:87.00px;font-size:9.5px;line-height:11.40px;color:#ececec;font-weight:normal;transform:scaleX(0.8504);">Layers</span>
<svg style="left:812.5px;top:89.5px;" width="7" height="7" viewBox="0 0 7 7"><path d="M0.8 0.8l5.4 5.4M6.2 0.8l-5.4 5.4" stroke="#d0d0d0" stroke-width="1.1"/></svg>
<div style="left:755.5px;top:108px;width:188.5px;height:254.5px;background:#2d2d2d;border:1px solid #242424;border-top:none;"></div>
<div style="left:756px;top:108.5px;width:187.5px;height:19.6px;background:#15539e;"></div>
<svg style="left:759.9px;top:111.9px;" width="14" height="13" viewBox="0 0 14 13"><path d="M1 7 Q7 -1.6 13 7 Q7 15 1 7 Z" fill="none" stroke="#ececec" stroke-width="1.15"/><circle cx="7" cy="6.9" r="2.7" fill="none" stroke="#ececec" stroke-width="1"/><circle cx="7" cy="6.9" r="1.2" fill="#ececec"/><path d="M2.6 2.8l-0.7-1M4.5 1.6l-0.4-1.2M6.4 1l-0.1-1.2M8.2 1.1l0.2-1.2M10 1.8l0.5-1.1M11.6 3l0.7-0.9" stroke="#ececec" stroke-width="0.55"/></svg>
<svg style="left:782.8px;top:112.0px;" width="12" height="13" viewBox="0 0 12 13"><rect x="0.3" y="6.3" width="7.7" height="5.8" fill="#ececec"/><path d="M6.9 6.5v-1.9a2.05 2.05 0 0 1 4.1 0v2.3" stroke="#ececec" stroke-width="1.3" fill="none"/></svg>
<span id="t37" class="t" style="left:814.75px;top:113.00px;font-size:9.5px;line-height:11.40px;color:#ececec;font-weight:normal;transform:scaleX(0.8521);">Layer 1</span>
<svg style="left:759.9px;top:131.7px;" width="14" height="13" viewBox="0 0 14 13"><path d="M1.2 3.6 Q7 10.4 12.8 3.6" fill="none" stroke="#ececec" stroke-width="1.4"/><path d="M2.4 6.2l-0.9 1M4.2 7.8l-0.6 1.2M6 8.6l-0.2 1.3M8 8.6l0.2 1.3M9.8 7.8l0.6 1.2M11.6 6.2l0.9 1" stroke="#ececec" stroke-width="0.6"/></svg>
<svg style="left:782.8px;top:131.1px;" width="12" height="13" viewBox="0 0 12 13"><rect x="0.3" y="6.3" width="7.7" height="5.8" fill="#ececec"/><path d="M6.9 6.5v-1.9a2.05 2.05 0 0 1 4.1 0v2.3" stroke="#ececec" stroke-width="1.3" fill="none"/></svg>
<span id="t38" class="t" style="left:814.75px;top:132.10px;font-size:9.5px;line-height:11.40px;color:#ececec;font-weight:normal;transform:scaleX(0.9191);">Grid</span>
<svg style="left:759.9px;top:150.9px;" width="14" height="13" viewBox="0 0 14 13"><path d="M1 7 Q7 -1.6 13 7 Q7 15 1 7 Z" fill="none" stroke="#ececec" stroke-width="1.15"/><circle cx="7" cy="6.9" r="2.7" fill="none" stroke="#ececec" stroke-width="1"/><circle cx="7" cy="6.9" r="1.2" fill="#ececec"/><path d="M2.6 2.8l-0.7-1M4.5 1.6l-0.4-1.2M6.4 1l-0.1-1.2M8.2 1.1l0.2-1.2M10 1.8l0.5-1.1M11.6 3l0.7-0.9" stroke="#ececec" stroke-width="0.55"/></svg>
<svg style="left:782.8px;top:151.0px;" width="12" height="13" viewBox="0 0 12 13"><rect x="0.3" y="6.3" width="7.7" height="5.8" fill="#ececec"/><path d="M6.9 6.5v-1.9a2.05 2.05 0 0 1 4.1 0v2.3" stroke="#ececec" stroke-width="1.3" fill="none"/></svg>
<span id="t39" class="t" style="left:814.75px;top:152.00px;font-size:9.5px;line-height:11.40px;color:#ececec;font-weight:normal;transform:scaleX(0.9368);">Background</span>
<svg style="left:764.5px;top:371.3px;" width="9" height="9" viewBox="0 0 9 9"><path d="M0.5 4.5h8M4.5 0.5v8" stroke="#ececec" stroke-width="1.2"/></svg>
<svg style="left:791.5px;top:371.3px;" width="9" height="9" viewBox="0 0 9 9"><path d="M0.5 4.5h8" stroke="#ececec" stroke-width="1.2"/></svg>
<svg style="left:845.25px;top:370.8px;" width="10" height="10" viewBox="0 0 10 10"><path d="M0.8 1h8.4" stroke="#5e5e5e" stroke-width="1.1"/><path d="M1.2 8.4l3.8-4 3.8 4" stroke="#5e5e5e" stroke-width="1.2" fill="none"/></svg>
<svg style="left:872.25px;top:370.8px;" width="10" height="10" viewBox="0 0 10 10"><path d="M1 7l4-4 4 4" stroke="#5e5e5e" stroke-width="1.2" fill="none"/></svg>
<svg style="left:899px;top:370.8px;" width="10" height="10" viewBox="0 0 10 10"><path d="M1 3l4 4 4-4" stroke="#ececec" stroke-width="1.3" fill="none"/></svg>
<svg style="left:926px;top:370.8px;" width="10" height="10" viewBox="0 0 10 10"><path d="M0.8 9h8.4" stroke="#ececec" stroke-width="1.1"/><path d="M1.2 1.6l3.8 4 3.8-4" stroke="#ececec" stroke-width="1.2" fill="none"/></svg>
<span id="t40" class="t" style="left:795.5px;top:399.10px;font-size:9.5px;line-height:11.40px;color:#ececec;font-weight:normal;transform:scaleX(0.9139);">Blend mode:</span>
<div style="left:852.5px;top:392.5px;width:84.2px;height:24.8px;background:#343434;border:1px solid #1e1e1e;border-radius:4px;"></div>
<span id="t41" class="t" style="left:861.5px;top:399.10px;font-size:9.5px;line-height:11.40px;color:#ececec;font-weight:normal;transform:scaleX(0.9469);">Normal</span>
<svg style="left:918.5px;top:402.5px;" width="10" height="5" viewBox="0 0 10 5"><path d="M0.6 0.4h8.8l-4.4 4.4z" fill="#f2f2f2"/></svg>
<div style="left:755.6px;top:430.1px;width:139.3px;height:24px;background:#222222;border:1px solid #181818;"></div>
<div style="left:755.6px;top:454.6px;width:139.3px;height:23.6px;background:#15539e;border:1px solid #181818;"></div>
<div style="left:894.5px;top:430.5px;width:50px;height:47.8px;background:#2d2d2d;"></div>
<div style="left:919.2px;top:431px;width:1px;height:47px;background:#282828;"></div>
<div style="left:932.2px;top:431px;width:1px;height:47px;background:#282828;"></div>
<span id="t42" class="t" style="left:759.75px;top:436.90px;font-size:9.5px;line-height:11.40px;color:#ececec;font-weight:normal;transform:scaleX(0.9035);">Blur (%)</span>
<span id="t43" class="t" style="left:759.75px;top:460.90px;font-size:9.5px;line-height:11.40px;color:#ececec;font-weight:normal;transform:scaleX(0.9270);">Opacity (%)</span>
<span id="t44" class="t" style="left:896.75px;top:436.90px;font-size:9.5px;line-height:11.40px;color:#ececec;font-weight:normal;transform:scaleX(0.8700);">0.0</span>
<span id="t45" class="t" style="left:897.25px;top:460.90px;font-size:9.5px;line-height:11.40px;color:#ececec;font-weight:normal;transform:scaleX(0.8410);">100.0</span>
<svg style="left:922px;top:438.6px;" width="8" height="8" viewBox="0 0 8 8"><path d="M0.6 4h6.8" stroke="#5e5e5e" stroke-width="1.1"/></svg>
<svg style="left:934.5px;top:438.6px;" width="8" height="8" viewBox="0 0 8 8"><path d="M0.4 4h7.2M4 0.4v7.2" stroke="#ececec" stroke-width="1.1"/></svg>
<svg style="left:922px;top:462.4px;" width="8" height="8" viewBox="0 0 8 8"><path d="M0.2 4h7.6" stroke="#ececec" stroke-width="1.2"/></svg>
<svg style="left:934.5px;top:462.4px;" width="8" height="8" viewBox="0 0 8 8"><path d="M0.6 4h6.8M4 0.6v6.8" stroke="#5e5e5e" stroke-width="1.1"/></svg>
<div style="left:961.5px;top:178.9px;width:26px;height:1px;background:#3a3a3a;"></div>
<div style="left:961.5px;top:241.5px;width:26px;height:1px;background:#3a3a3a;"></div>
<div style="left:961.5px;top:305.1px;width:26px;height:1px;background:#3a3a3a;"></div>
<div style="left:961.5px;top:393.9px;width:26px;height:1px;background:#3a3a3a;"></div>
<div style="left:994.5px;top:99.8px;width:26px;height:1px;background:#3a3a3a;"></div>
<div style="left:994.5px;top:241.5px;width:26px;height:1px;background:#3a3a3a;"></div>
<div style="left:994.5px;top:410.1px;width:26px;height:1px;background:#3a3a3a;"></div>
<svg style="left:966.4px;top:74.5px;" width="16" height="16" viewBox="0 0 16 16"><path d="M4.4 3.2h4.2l2.8 2.8v2.6" fill="none" stroke="#ececec" stroke-width="1.7" stroke-linejoin="round"/><path d="M4.4 2.4v10.6h3.6" fill="none" stroke="#ececec" stroke-width="1.7"/><path d="M11.4 9.2v4.6M9.1 11.5h4.6" stroke="#ececec" stroke-width="1.4"/></svg>
<svg style="left:966.4px;top:100.6px;" width="16" height="16" viewBox="0 0 16 16"><path d="M6.4 7.6v-4.4h4l2.6 2.6v2" fill="none" stroke="#ececec" stroke-width="1.3" stroke-linejoin="round"/><path d="M3.2 13v-6.4q0-1.6 1.8-1.6" fill="none" stroke="#ececec" stroke-width="1.4"/><rect x="3" y="8.8" width="11.2" height="4.6" rx="0.8" fill="#ececec"/><path d="M4.6 9.4h8" stroke="#353535" stroke-width="0.7"/></svg>
<svg style="left:966.4px;top:127.0px;" width="16" height="16" viewBox="0 0 16 16"><path d="M8 2.6v7" stroke="#ececec" stroke-width="1.3"/><path d="M4.6 7l3.4 3.4 3.4-3.4" fill="none" stroke="#ececec" stroke-width="1.3"/><path d="M3.4 12.6h9.2" stroke="#ececec" stroke-width="1.2"/></svg>
<svg style="left:966.4px;top:153.0px;" width="16" height="16" viewBox="0 0 16 16"><rect x="4.6" y="3" width="6.8" height="1.6" fill="#ececec"/><rect x="2.6" y="5.4" width="10.8" height="5.2" rx="1" fill="#ececec"/><rect x="4.6" y="9" width="6.8" height="4.4" fill="#ececec" stroke="#353535" stroke-width="0.9"/><rect x="5.6" y="10" width="4.8" height="2.6" fill="#d8d8d8"/></svg>
<svg style="left:966.4px;top:189.5px;" width="16" height="16" viewBox="0 0 16 16"><path d="M5 6v-3.4h5l2.6 2.6v8h-7.6v-3" fill="none" stroke="#ececec" stroke-width="1.4" stroke-linejoin="round"/><path d="M2.6 8.2h5" stroke="#ececec" stroke-width="1.3"/><path d="M7 5.8l2.8 2.4-2.8 2.4z" fill="#ececec"/></svg>
<svg style="left:966.4px;top:216.4px;" width="16" height="16" viewBox="0 0 16 16"><path d="M10 5.4l-2.4-2.6h-5v10.6h6.6v-2" fill="none" stroke="#ececec" stroke-width="1.4" stroke-linejoin="round"/><path d="M7 8.4h5" stroke="#ececec" stroke-width="1.3"/><path d="M11 6l2.8 2.4-2.8 2.4z" fill="#ececec"/></svg>
<svg style="left:966.4px;top:253.0px;" width="16" height="16" viewBox="0 0 16 16"><path d="M4.4 7h5.2q2.8 0 2.8 2.6q0 1.8-1.6 2.4" fill="none" stroke="#ececec" stroke-width="1.5"/><path d="M7 3.4l-4 3.6 4 3.6z" fill="#ececec"/></svg>
<svg style="left:966.4px;top:279.2px;" width="16" height="16" viewBox="0 0 16 16"><path d="M11.6 7h-5.2q-2.8 0-2.8 2.6q0 1.8 1.6 2.4" fill="none" stroke="#606060" stroke-width="1.5"/><path d="M9 3.4l4 3.6-4 3.6z" fill="#606060"/></svg>
<svg style="left:966.4px;top:316.4px;" width="16" height="16" viewBox="0 0 16 16"><rect x="3.2" y="2.8" width="5.6" height="6.6" fill="#ececec"/><path d="M7.8 6.4h4.2l1.4 1.4v5.4h-5.6z" fill="#ececec" stroke="#353535" stroke-width="0.8"/></svg>
<svg style="left:966.4px;top:342.6px;" width="16" height="16" viewBox="0 0 16 16"><path d="M5.2 5.4l8 6.6M5.2 10.8l8-6.8" stroke="#ececec" stroke-width="1.2"/><circle cx="4.6" cy="4.6" r="1.6" fill="none" stroke="#ececec" stroke-width="1"/><circle cx="4.6" cy="11.6" r="1.6" fill="none" stroke="#ececec" stroke-width="1"/></svg>
<svg style="left:966.4px;top:368.2px;" width="16" height="16" viewBox="0 0 16 16"><rect x="3.2" y="3.4" width="9.6" height="10.4" rx="1" fill="none" stroke="#ececec" stroke-width="1.3"/><rect x="5.8" y="2" width="4.4" height="2.6" fill="#ececec"/><rect x="5.6" y="6.4" width="4.8" height="5" fill="#d0d0d0"/></svg>
<svg style="left:966.4px;top:405.4px;" width="16" height="16" viewBox="0 0 16 16"><rect x="2.6" y="3" width="7" height="6.4" fill="#ececec"/><rect x="6.2" y="6.6" width="7.4" height="6.8" fill="#ececec" stroke="#353535" stroke-width="0.9"/></svg>
<svg style="left:966.4px;top:431.9px;" width="16" height="16" viewBox="0 0 16 16"><rect x="2.6" y="3" width="7" height="6.4" fill="#ececec"/><rect x="6.4" y="6.8" width="7" height="6.4" fill="#353535" stroke="#ececec" stroke-width="1.2"/><rect x="8" y="9.6" width="3.8" height="2.8" fill="#ececec"/><path d="M8.7 9.6v-0.8a1.2 1.2 0 0 1 2.4 0v0.8" stroke="#ececec" stroke-width="0.8" fill="none"/></svg>
<svg style="left:972px;top:473.6px;" width="6" height="9" viewBox="0 0 6 9"><path d="M0.6 0.4l4.6 4-4.6 4z" fill="#ececec"/></svg>
<svg style="left:1005px;top:473.6px;" width="6" height="9" viewBox="0 0 6 9"><path d="M0.6 0.4l4.6 4-4.6 4z" fill="#ececec"/></svg>
<div style="left:994px;top:70.0px;width:27px;height:25.1px;background:#1f1f1f;border-radius:4.5px;"></div>
<svg style="left:999.1px;top:74.4px;" width="16" height="16" viewBox="0 0 16 16"><path d="M7 3.3h1.2a4.75 4.75 0 0 1 0 9.5h-1.2" fill="none" stroke="#ececec" stroke-width="2.4"/><path d="M3.8 3.3h2.1M3.8 12.8h2.1" stroke="#ececec" stroke-width="2.4"/><path d="M3.9 5.7l-1.7 1.5 1.9 1.2-1.8 1.7" fill="none" stroke="#ececec" stroke-width="1"/></svg>
<svg style="left:999.1px;top:110.8px;" width="16" height="16" viewBox="0 0 16 16"><path d="M7 3.3h1.2a4.75 4.75 0 0 1 0 9.5h-1.2" fill="none" stroke="#ececec" stroke-width="2.4"/><path d="M3.8 3.3h2.1M3.8 12.8h2.1" stroke="#ececec" stroke-width="2.4"/><path d="M3.9 5.7l-1.7 1.5 1.9 1.2-1.8 1.7" fill="none" stroke="#ececec" stroke-width="1"/></svg>
<svg style="left:999.6px;top:137.6px;" width="16" height="16" viewBox="0 0 16 16"><path d="M2.6 3.4h11" stroke="#6a6a6a" stroke-width="1.3" stroke-dasharray="2 1"/><path d="M3 3v11" stroke="#6a6a6a" stroke-width="1.3" stroke-dasharray="2 1"/><path d="M9.6 7.2l2-2.4 2 2.4z M7.2 9.4l-2.4 2 2.4 2z" fill="#6a6a6a"/></svg>
<svg style="left:999.6px;top:163.2px;" width="16" height="16" viewBox="0 0 16 16"><path d="M2.6 13.2h11" stroke="#6a6a6a" stroke-width="1.3" stroke-dasharray="2 1"/><path d="M12.6 2.4v11.4" stroke="#6a6a6a" stroke-width="1.3" stroke-dasharray="2 1"/><path d="M5.6 11.4l5.4-6.4v6.4z" fill="#6a6a6a"/></svg>
<svg style="left:999.6px;top:189.9px;" width="16" height="16" viewBox="0 0 16 16"><rect x="3.6" y="2.6" width="10" height="10.8" fill="none" stroke="#6a6a6a" stroke-width="1.3" stroke-dasharray="2.2 1.6"/><path d="M3.6 2.2v11.6M3.6 8h8" stroke="#6a6a6a" stroke-width="1.2"/><path d="M2 4l1.6-2 1.6 2zM2 12l1.6 2 1.6-2zM10.4 6.2l2.2 1.8-2.2 1.8z" fill="#6a6a6a"/></svg>
<svg style="left:999.6px;top:216.0px;" width="16" height="16" viewBox="0 0 16 16"><rect x="2.8" y="2.8" width="10.6" height="10.6" fill="none" stroke="#6a6a6a" stroke-width="1.3" stroke-dasharray="2.2 1.6"/><path d="M8.1 4v8.4M4 8.1h8.4" stroke="#6a6a6a" stroke-width="1.2"/></svg>
<div style="left:994px;top:248.6px;width:27px;height:25.1px;background:#1f1f1f;border-radius:4.5px;"></div>
<svg style="left:999.1px;top:253.0px;" width="16" height="16" viewBox="0 0 16 16"><path d="M7 3.3h1.2a4.75 4.75 0 0 1 0 9.5h-1.2" fill="none" stroke="#ececec" stroke-width="2.4"/><path d="M3.8 3.3h2.1M3.8 12.8h2.1" stroke="#ececec" stroke-width="2.4"/><path d="M3.9 5.7l-1.7 1.5 1.9 1.2-1.8 1.7" fill="none" stroke="#ececec" stroke-width="1"/></svg>
<svg style="left:999.6px;top:280.0px;" width="16" height="16" viewBox="0 0 16 16"><path d="M2.4 12.6q0-7 5.6-7t5.6 7" fill="none" stroke="#ececec" stroke-width="1.2"/><rect x="6.6" y="3" width="2.8" height="2.8" fill="#ececec"/><path d="M2.6 3l2.4 1.4-2.4 1.4zM13.4 3l-2.4 1.4 2.4 1.4z" fill="#ececec"/><path d="M4.4 4.4h7.2" stroke="#ececec" stroke-width="0.6"/></svg>
<svg style="left:999.6px;top:305.0px;" width="16" height="16" viewBox="0 0 16 16"><path d="M2.6 13.4l11-11M2.4 9.6l11.4-2.6" stroke="#ececec" stroke-width="0.9"/><circle cx="8.2" cy="8" r="1.9" fill="#ececec"/></svg>
<div style="left:994px;top:327px;width:27px;height:25.2px;background:#1f1f1f;border-radius:4px;"></div>
<svg style="left:999.6px;top:331.6px;" width="16" height="16" viewBox="0 0 16 16"><path d="M3 3.2q6.4 1 7.4 8" fill="none" stroke="#ececec" stroke-width="1"/><path d="M13.8 9.4q-1.6 3.6-5 4" fill="none" stroke="#ececec" stroke-width="0.9"/><rect x="7" y="10.6" width="3" height="3" fill="#ececec" transform="rotate(-30 8.5 12)"/></svg>
<svg style="left:999.6px;top:360.0px;" width="16" height="16" viewBox="0 0 16 16"><path d="M2.2 11.6q0-7 5.8-7t5.8 7" fill="none" stroke="#ececec" stroke-width="1.2"/><circle cx="8" cy="4.4" r="1.6" fill="#ececec"/></svg>
<svg style="left:999.6px;top:384.0px;" width="16" height="16" viewBox="0 0 16 16"><path d="M4.4 2.4v11.2M11.8 2v12M4.4 8h5" stroke="#ececec" stroke-width="1"/><path d="M2.8 4.2l1.6-2 1.6 2zM2.8 11.8l1.6 2 1.6-2zM7 6.2l2.2 1.8-2.2 1.8z" fill="#ececec"/><circle cx="11.8" cy="8" r="1.7" fill="#ececec"/></svg>
<div style="left:994px;top:416.70000000000005px;width:27px;height:25.1px;background:#1f1f1f;border-radius:4.5px;"></div>
<svg style="left:999.1px;top:421.1px;" width="16" height="16" viewBox="0 0 16 16"><path d="M7 3.3h1.2a4.75 4.75 0 0 1 0 9.5h-1.2" fill="none" stroke="#ececec" stroke-width="2.4"/><path d="M3.8 3.3h2.1M3.8 12.8h2.1" stroke="#ececec" stroke-width="2.4"/><path d="M3.9 5.7l-1.7 1.5 1.9 1.2-1.8 1.7" fill="none" stroke="#ececec" stroke-width="1"/></svg>
<div style="left:0px;top:494px;width:1024px;height:26px;background:#353535;"></div>
<div style="left:1px;top:494px;width:21.5px;height:26px;background:#ffffff;"></div>
<svg style="left:1px;top:494px;" width="21.5" height="26" viewBox="0 0 21.5 26"><path d="M0.8 0.8L20.7 25.2M20.7 0.8L0.8 25.2" stroke="#8a0f10" stroke-width="1.9"/></svg>
<div style="left:22.5px;top:494px;width:22.04px;height:26px;background:#99c1f1;"></div>
<div style="left:44.24px;top:494px;width:22.04px;height:26px;background:#62a0ea;"></div>
<div style="left:65.98px;top:494px;width:22.04px;height:26px;background:#3584e4;"></div>
<div style="left:87.72px;top:494px;width:22.04px;height:26px;background:#1c71d8;"></div>
<div style="left:109.46px;top:494px;width:22.04px;height:26px;background:#1a5fb4;"></div>
<div style="left:131.2px;top:494px;width:22.04px;height:26px;background:#8ff0a4;"></div>
<div style="left:152.94px;top:494px;width:22.04px;height:26px;background:#57e389;"></div>
<div style="left:174.68px;top:494px;width:22.04px;height:26px;background:#33d17a;"></div>
<div style="left:196.42px;top:494px;width:22.04px;height:26px;background:#2ec27e;"></div>
<div style="left:218.16px;top:494px;width:22.04px;height:26px;background:#26a269;"></div>
<div style="left:239.9px;top:494px;width:22.04px;height:26px;background:#f9f06b;"></div>
<div style="left:261.64px;top:494px;width:22.04px;height:26px;background:#f8e45c;"></div>
<div style="left:283.38px;top:494px;width:22.04px;height:26px;background:#f6d32d;"></div>
<div style="left:305.12px;top:494px;width:22.04px;height:26px;background:#f5c211;"></div>
<div style="left:326.86px;top:494px;width:22.04px;height:26px;background:#e5a50a;"></div>
<div style="left:348.6px;top:494px;width:22.04px;height:26px;background:#ffbe6f;"></div>
<div style="left:370.34px;top:494px;width:22.04px;height:26px;background:#ffa348;"></div>
<div style="left:392.08px;top:494px;width:22.04px;height:26px;background:#ff7800;"></div>
<div style="left:413.82px;top:494px;width:22.04px;height:26px;background:#e66100;"></div>
<div style="left:435.56px;top:494px;width:22.04px;height:26px;background:#c64600;"></div>
<div style="left:457.3px;top:494px;width:22.04px;height:26px;background:#f66151;"></div>
<div style="left:479.04px;top:494px;width:22.04px;height:26px;background:#ed333b;"></div>
<div style="left:500.78px;top:494px;width:22.04px;height:26px;background:#e01b24;"></div>
<div style="left:522.52px;top:494px;width:22.04px;height:26px;background:#c01c28;"></div>
<div style="left:544.26px;top:494px;width:22.04px;height:26px;background:#a51d2d;"></div>
<div style="left:566.0px;top:494px;width:22.04px;height:26px;background:#dc8add;"></div>
<div style="left:587.74px;top:494px;width:22.04px;height:26px;background:#c061cb;"></div>
<div style="left:609.48px;top:494px;width:22.04px;height:26px;background:#9141ac;"></div>
<div style="left:631.22px;top:494px;width:22.04px;height:26px;background:#813d9c;"></div>
<div style="left:652.96px;top:494px;width:22.04px;height:26px;background:#613583;"></div>
<div style="left:674.7px;top:494px;width:22.04px;height:26px;background:#cdab8f;"></div>
<div style="left:696.44px;top:494px;width:22.04px;height:26px;background:#b5835a;"></div>
<div style="left:718.18px;top:494px;width:22.04px;height:26px;background:#986a44;"></div>
<div style="left:739.92px;top:494px;width:22.04px;height:26px;background:#865e3c;"></div>
<div style="left:761.66px;top:494px;width:22.04px;height:26px;background:#63452c;"></div>
<div style="left:783.4px;top:494px;width:22.4px;height:26px;background:#ffffff;"></div>
<div style="left:805.5px;top:494px;width:22.05px;height:26px;background:#f6f5f4;"></div>
<div style="left:827.25px;top:494px;width:21.55px;height:26px;background:#deddda;"></div>
<div style="left:848.5px;top:494px;width:22.05px;height:26px;background:#c0bfbc;"></div>
<div style="left:870.25px;top:494px;width:21.3px;height:26px;background:#9a9996;"></div>
<div style="left:891.25px;top:494px;width:21.3px;height:26px;background:#77767b;"></div>
<div style="left:912.25px;top:494px;width:21.3px;height:26px;background:#5e5c64;"></div>
<div style="left:933.25px;top:494px;width:21.3px;height:26px;background:#3d3846;"></div>
<div style="left:954.25px;top:494px;width:21.3px;height:26px;background:#241f31;"></div>
<div style="left:975.25px;top:494px;width:21.05px;height:26px;background:#000000;"></div>
<svg style="left:1005.5px;top:502.5px;" width="6" height="9" viewBox="0 0 6 9"><path d="M5.4 0.4l-4.8 4.1 4.8 4.1z" fill="#ececec"/></svg>
<div style="left:0px;top:520px;width:1024px;height:26px;background:#353535;"></div>
<span id="t46" class="t" style="left:14.7px;top:522.02px;font-size:9.3px;line-height:11.16px;color:#ececec;font-weight:normal;transform:scaleX(0.8985);">Fill:</span>
<span id="t47" class="t" style="left:2px;top:534.62px;font-size:9.3px;line-height:11.16px;color:#ececec;font-weight:normal;transform:scaleX(0.8828);">Stroke:</span>
<span id="t48" class="t" style="left:51px;top:522.02px;font-size:9.3px;line-height:11.16px;color:#ececec;font-weight:normal;transform:scaleX(1.0645);">N/A</span>
<span id="t49" class="t" style="left:51px;top:534.62px;font-size:9.3px;line-height:11.16px;color:#ececec;font-weight:normal;transform:scaleX(1.0645);">N/A</span>
<span id="t50" class="t" style="left:111px;top:527.92px;font-size:9.3px;line-height:11.16px;color:#ececec;font-weight:normal;transform:scaleX(0.8649);">O:</span>
<div style="left:121.35px;top:521px;width:50.8px;height:24.5px;background:#323232;border:1px solid #1c1c1c;border-radius:4.5px;"></div>
<div style="left:147.4px;top:522px;width:1px;height:22.5px;background:#2a2a2a;"></div>
<div style="left:159.0px;top:522px;width:1px;height:22.5px;background:#2a2a2a;"></div>
<span id="t51" class="t" style="left:125px;top:527.00px;font-size:9.5px;line-height:11.40px;color:#8a8a8a;font-weight:normal;transform:scaleX(0.8197);">100</span>
<svg style="left:149px;top:528.7px;" width="8" height="8" viewBox="0 0 8 8"><path d="M0.2 4h7.6" stroke="#5a5a5a" stroke-width="1.1"/></svg>
<svg style="left:161px;top:528.7px;" width="8" height="8" viewBox="0 0 8 8"><path d="M0.2 4h7.6M4 0.2v7.6" stroke="#5a5a5a" stroke-width="1.1"/></svg>
<svg style="left:195.2px;top:526.5px;" width="14" height="13" viewBox="0 0 14 13"><path d="M1 7 Q7 -1.6 13 7 Q7 15 1 7 Z" fill="none" stroke="#ececec" stroke-width="1.15"/><circle cx="7" cy="6.9" r="2.7" fill="none" stroke="#ececec" stroke-width="1"/><circle cx="7" cy="6.9" r="1.2" fill="#ececec"/><path d="M2.6 2.8l-0.7-1M4.5 1.6l-0.4-1.2M6.4 1l-0.1-1.2M8.2 1.1l0.2-1.2M10 1.8l0.5-1.1M11.6 3l0.7-0.9" stroke="#ececec" stroke-width="0.55"/></svg>
<svg style="left:224px;top:526.5px;" width="12" height="13" viewBox="0 0 12 13"><rect x="0.3" y="6.3" width="7.7" height="5.8" fill="#ececec"/><path d="M6.9 6.5v-1.9a2.05 2.05 0 0 1 4.1 0v2.3" stroke="#ececec" stroke-width="1.3" fill="none"/></svg>
<div style="left:243px;top:521px;width:74px;height:24.5px;background:#343434;border:1px solid #1e1e1e;border-radius:4px;"></div>
<span id="t52" class="t" style="left:253px;top:529.22px;font-size:7.8px;line-height:9.36px;color:#ececec;font-weight:normal;transform:scaleX(0.9565);">•Layer 1</span>
<svg style="left:299.5px;top:531px;" width="10" height="5" viewBox="0 0 10 5"><path d="M0.6 0.4h8.8l-4.4 4.4z" fill="#f2f2f2"/></svg>
<span id="t53" class="t" style="left:318.75px;top:527.70px;font-size:9.5px;line-height:11.40px;color:#ececec;font-weight:normal;transform:scaleX(0.9368);">No objects selected. Click, Shift+click, Alt+scroll mouse on top of objects, or drag around objects to select.</span>
<span id="t54" class="t" style="left:793.75px;top:522.02px;font-size:9.3px;line-height:11.16px;color:#ececec;font-weight:normal;transform:scaleX(0.7957);">X:</span>
<span id="t55" class="t" style="left:793.75px;top:534.62px;font-size:9.3px;line-height:11.16px;color:#ececec;font-weight:normal;transform:scaleX(0.8453);">Y:</span>
<span id="t56" class="t" style="left:810.5px;top:522.02px;font-size:9.3px;line-height:11.16px;color:#ececec;font-weight:normal;transform:scaleX(0.8703);">872.56</span>
<span id="t57" class="t" style="left:815.2px;top:534.62px;font-size:9.3px;line-height:11.16px;color:#ececec;font-weight:normal;transform:scaleX(0.8596);">34.63</span>
<span id="t58" class="t" style="left:843px;top:527.92px;font-size:9.3px;line-height:11.16px;color:#ececec;font-weight:normal;transform:scaleX(0.7864);">Z:</span>
<div style="left:857.6px;top:521px;width:66.3px;height:24.5px;background:#323232;border:1px solid #1c1c1c;border-radius:4.5px;"></div>
<div style="left:892.4px;top:522px;width:1px;height:22.5px;background:#2a2a2a;"></div>
<div style="left:905.875px;top:522px;width:1px;height:22.5px;background:#2a2a2a;"></div>
<span id="t59" class="t" style="left:866px;top:527.00px;font-size:9.5px;line-height:11.40px;color:#ececec;font-weight:normal;transform:scaleX(0.8677);">32%</span>
<svg style="left:894px;top:528.7px;" width="8" height="8" viewBox="0 0 8 8"><path d="M0.2 4h7.6" stroke="#ececec" stroke-width="1.1"/></svg>
<svg style="left:909.75px;top:528.7px;" width="8" height="8" viewBox="0 0 8 8"><path d="M0.2 4h7.6M4 0.2v7.6" stroke="#ececec" stroke-width="1.1"/></svg>
<span id="t60" class="t" style="left:931.75px;top:527.92px;font-size:9.3px;line-height:11.16px;color:#ececec;font-weight:normal;transform:scaleX(0.8054);">R:</span>
<div style="left:946.35px;top:521px;width:69.55px;height:24.5px;background:#323232;border:1px solid #1c1c1c;border-radius:4.5px;"></div>
<div style="left:984.9px;top:522px;width:1px;height:22.5px;background:#2a2a2a;"></div>
<div style="left:998.625px;top:522px;width:1px;height:22.5px;background:#2a2a2a;"></div>
<span id="t61" class="t" style="left:956px;top:527.00px;font-size:9.5px;line-height:11.40px;color:#ececec;font-weight:normal;transform:scaleX(0.8746);">0.00°</span>
<svg style="left:986.5px;top:528.7px;" width="8" height="8" viewBox="0 0 8 8"><path d="M0.2 4h7.6" stroke="#ececec" stroke-width="1.1"/></svg>
<svg style="left:1002.75px;top:528.7px;" width="8" height="8" viewBox="0 0 8 8"><path d="M0.2 4h7.6M4 0.2v7.6" stroke="#ececec" stroke-width="1.1"/></svg>
</div></body></html>
